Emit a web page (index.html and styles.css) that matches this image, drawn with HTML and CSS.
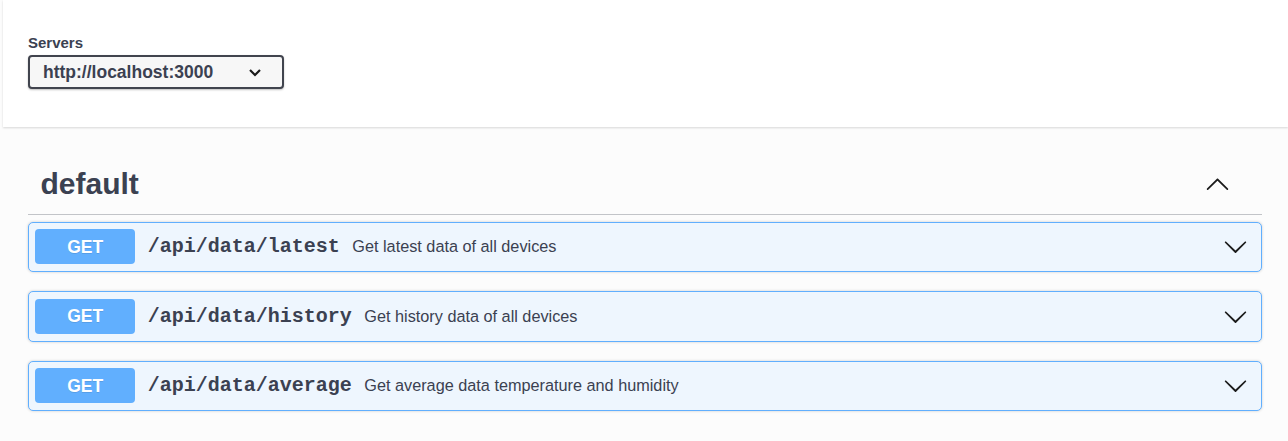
FILE: index.html
```html
<!DOCTYPE html>
<html lang="en">
<head>
<meta charset="utf-8">
<title>Swagger UI</title>
<link rel="stylesheet" href="styles.css">
</head>
<body>
<div class="scheme">
  <div class="servers">
    <label class="servers-label">Servers</label>
    <div class="select">
      <span class="select-value">http://localhost:3000</span>
      <svg class="select-arrow" width="14" height="10" viewBox="0 0 14 10"><path d="M2 3 L7 8 L12 3" fill="none" stroke="#1b1b1b" stroke-width="2.2"/></svg>
    </div>
  </div>
</div>

<div class="section">
  <h3 class="tag">
    <span class="tag-name">default</span>
    <svg class="tag-arrow" width="25" height="25" viewBox="0 0 20 20"><path d="M17.418 14.908c.272.268.709.268.979 0s.271-.701 0-.969l-7.908-7.83c-.27-.268-.707-.268-.979 0l-7.908 7.83c-.27.268-.27.701 0 .969.271.268.709.268.979 0L10 7.767l7.418 7.141z" fill="#1b1b1b"/></svg>
  </h3>

  <div class="opblock">
    <span class="method">GET</span>
    <span class="path">/api/data/latest</span>
    <span class="desc">Get latest data of all devices</span>
    <svg class="op-arrow" width="25" height="25" viewBox="0 0 20 20"><path d="M17.418 6.109c.272-.268.709-.268.979 0s.271.701 0 .969l-7.908 7.83c-.27.268-.707.268-.979 0l-7.908-7.830c-.27-.268-.27-.701 0-.969.271-.268.709-.268.979 0L10 13.25l7.418-7.141z" fill="#1b1b1b"/></svg>
  </div>

  <div class="opblock">
    <span class="method">GET</span>
    <span class="path">/api/data/history</span>
    <span class="desc">Get history data of all devices</span>
    <svg class="op-arrow" width="25" height="25" viewBox="0 0 20 20"><path d="M17.418 6.109c.272-.268.709-.268.979 0s.271.701 0 .969l-7.908 7.83c-.27.268-.707.268-.979 0l-7.908-7.83c-.27-.268-.27-.701 0-.969.271-.268.709-.268.979 0L10 13.25l7.418-7.141z" fill="#1b1b1b"/></svg>
  </div>

  <div class="opblock">
    <span class="method">GET</span>
    <span class="path">/api/data/average</span>
    <span class="desc">Get average data temperature and humidity</span>
    <svg class="op-arrow" width="25" height="25" viewBox="0 0 20 20"><path d="M17.418 6.109c.272-.268.709-.268.979 0s.271.701 0 .969l-7.908 7.83c-.27.268-.707.268-.979 0l-7.908-7.83c-.27-.268-.27-.701 0-.969.271-.268.709-.268.979 0L10 13.25l7.418-7.141z" fill="#1b1b1b"/></svg>
  </div>
</div>
</body>
</html>
```

FILE: styles.css
```css
html, body {
  margin: 0;
  padding: 0;
}

body {
  background: #fcfcfc;
  font-family: "Liberation Sans", Arial, sans-serif;
  color: #3b4151;
}

.scheme {
  margin-left: 3px;
  background: #fff;
  box-shadow: 0 1px 2px 0 rgba(0, 0, 0, 0.15);
  padding: 34px 0 38px 25px;
}

.servers {
  display: flex;
  flex-direction: column;
  align-items: flex-start;
}

.servers-label {
  display: block;
  font-size: 15px;
  font-weight: 700;
  line-height: 18px;
  color: #3b4151;
  margin-bottom: 3px;
}

.select {
  box-sizing: border-box;
  width: 256px;
  height: 34px;
  display: flex;
  align-items: center;
  justify-content: space-between;
  padding: 0 20px 0 13px;
  border: 2px solid #41444e;
  border-radius: 4px;
  background: #f7f7f7;
  box-shadow: 0 1px 2px 0 rgba(0, 0, 0, 0.25);
  font-size: 17.5px;
  font-weight: 700;
  color: #3b4151;
}

.select-arrow {
  display: block;
}

.section {
  padding: 0 26px 0 28px;
  margin-top: 27px;
}

.tag {
  display: flex;
  align-items: center;
  justify-content: space-between;
  margin: 0 0 7px;
  padding: 12.5px 32px 12.5px 12.5px;
  border-bottom: 1px solid rgba(59, 65, 81, 0.3);
  font-size: 30px;
  font-weight: 700;
  color: #3b4151;
}

.tag-name {
  line-height: 34.5px;
}

.tag-arrow {
  display: block;
}

.opblock {
  display: flex;
  align-items: center;
  margin-bottom: 19px;
  padding: 6.75px 13px 6.75px 6.25px;
  border: 1px solid #61affe;
  border-radius: 5px;
  background: #eef6fe;
  box-shadow: 0 0 3px rgba(0, 0, 0, 0.19);
}

.method {
  flex: none;
  width: 100px;
  padding: 7.5px 0;
  line-height: 20px;
  text-align: center;
  border-radius: 4px;
  background: #61affe;
  color: #fff;
  font-size: 17.5px;
  font-weight: 700;
  text-shadow: 0 1px 0 rgba(0, 0, 0, 0.1);
}

.path {
  padding: 0 12.5px;
  font-family: "Liberation Mono", "Courier New", monospace;
  font-size: 20px;
  font-weight: 700;
  color: #3b4151;
}

.desc {
  flex: 1;
  font-size: 16.25px;
  color: #3b4151;
}

.op-arrow {
  display: block;
  flex: none;
}
```
